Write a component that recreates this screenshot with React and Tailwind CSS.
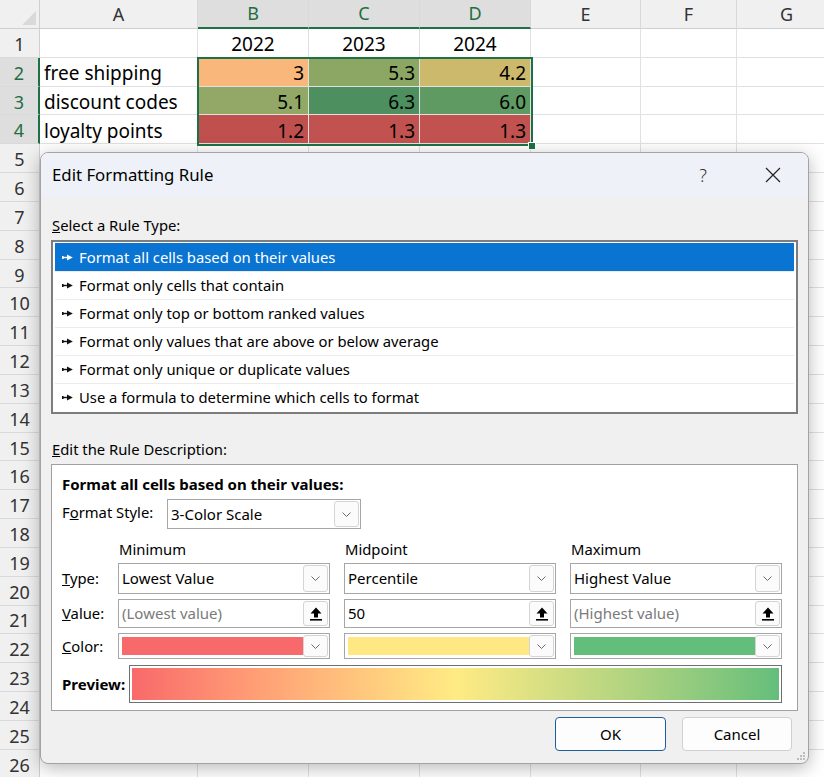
import React from 'react';

const sheetCols = [
  { key: 'A', w: 'w-[158px]' },
  { key: 'B', w: 'w-[111px]' },
  { key: 'C', w: 'w-[111px]' },
  { key: 'D', w: 'w-[111px]' },
  { key: 'E', w: 'w-[110px]' },
  { key: 'F', w: 'w-[96px]' },
  { key: 'G', w: 'w-[100px]' },
];

const selectedCols = ['B', 'C', 'D'];
const selectedRows = [2, 3, 4];

// cell contents and fills for the little table
const cells = {
  1: { B: { v: '2022', c: true }, C: { v: '2023', c: true }, D: { v: '2024', c: true } },
  2: {
    A: { v: 'free shipping' },
    B: { v: '3', bg: 'bg-[#f9b77b]' },
    C: { v: '5.3', bg: 'bg-[#8ca764]' },
    D: { v: '4.2', bg: 'bg-[#cdb96c]' },
  },
  3: {
    A: { v: 'discount codes' },
    B: { v: '5.1', bg: 'bg-[#93a866]' },
    C: { v: '6.3', bg: 'bg-[#4d8f5f]' },
    D: { v: '6.0', bg: 'bg-[#5e9a62]' },
  },
  4: {
    A: { v: 'loyalty points' },
    B: { v: '1.2', bg: 'bg-[#bf504e]' },
    C: { v: '1.3', bg: 'bg-[#c1524f]' },
    D: { v: '1.3', bg: 'bg-[#c1524f]' },
  },
};

const rules = [
  'Format all cells based on their values',
  'Format only cells that contain',
  'Format only top or bottom ranked values',
  'Format only values that are above or below average',
  'Format only unique or duplicate values',
  'Use a formula to determine which cells to format',
];

function RuleArrow({ white }) {
  const f = white ? '#fff' : '#111';
  return (
    <svg width="11" height="7" viewBox="0 0 11 7" className="shrink-0">
      <rect x="0" y="2" width="1.6" height="3" fill={f} />
      <rect x="0" y="2.8" width="6" height="1.4" fill={f} />
      <path d="M5 0.4 L10.8 3.5 L5 6.6 Z" fill={f} />
    </svg>
  );
}

function Chevron() {
  return (
    <svg width="9" height="5" viewBox="0 0 9 5">
      <polyline points="0.5,0.5 4.5,4.5 8.5,0.5" fill="none" stroke="#6a6a6a" strokeWidth="1" />
    </svg>
  );
}

function UpArrow() {
  return (
    <svg width="12" height="14" viewBox="0 0 12 14">
      <path d="M6 0.5 L11.5 6.5 H8 V10.5 H4 V6.5 H0.5 Z" fill="#000" />
      <rect x="0" y="12" width="12" height="1.6" fill="#000" />
    </svg>
  );
}

function SideButton({ children }) {
  return (
    <div className="w-[25px] self-stretch my-[1px] mr-[1px] flex items-center justify-center bg-[#fbfbfb] border border-[#d4d4d4] rounded-[3px]">
      {children}
    </div>
  );
}

function Dropdown({ text, h = 'h-[31px]' }) {
  return (
    <div className={`${h} flex items-stretch bg-white border border-[#a6a6a6]`}>
      <div className="flex-1 flex items-center pl-[3px] text-[15px] text-black">{text}</div>
      <SideButton><Chevron /></SideButton>
    </div>
  );
}

function ValueBox({ text, muted }) {
  return (
    <div className="h-[29px] flex items-stretch bg-white border border-[#a6a6a6]">
      <div className={`flex-1 flex items-center pl-[3px] text-[15px] ${muted ? 'text-[#7a7a7a]' : 'text-black'}`}>{text}</div>
      <SideButton><UpArrow /></SideButton>
    </div>
  );
}

function ColorBox({ swatch }) {
  return (
    <div className="h-[26px] flex items-stretch bg-white border border-[#a6a6a6]">
      <div className="flex-1 p-[3px] pr-0">
        <div className={`h-full ${swatch}`} />
      </div>
      <SideButton><Chevron /></SideButton>
    </div>
  );
}

function Sheet() {
  const rows = Array.from({ length: 26 }, (_, i) => i + 1);
  return (
    <div className="flex flex-col text-[19px] text-black">
      {/* column headers */}
      <div className="flex h-[29px] shrink-0 text-[18px]">
        <div className="w-[40px] shrink-0 bg-[#f0f0f0] border-r border-b border-[#cfcfcf] relative">
          <div className="absolute right-[3px] bottom-[3px] w-0 h-0 border-l-[14px] border-l-transparent border-b-[14px] border-b-[#d9d9d9]" />
        </div>
        {sheetCols.map((c) => {
          const sel = selectedCols.includes(c.key);
          return (
            <div
              key={c.key}
              className={`${c.w} shrink-0 flex items-center justify-center border-r border-[#d9d9d9] ${
                sel
                  ? 'bg-[#dedede] text-[#1e6e42] border-b-2 border-b-[#1e7145]'
                  : 'bg-[#f0f0f0] text-[#333] border-b border-b-[#cfcfcf]'
              }`}
            >
              {c.key}
            </div>
          );
        })}
      </div>
      {rows.map((r) => {
        const rsel = selectedRows.includes(r);
        return (
          <div key={r} className="flex h-[28.84px] shrink-0">
            <div
              className={`w-[40px] shrink-0 flex items-center justify-center pt-[3px] border-b border-[#d9d9d9] text-[18px] ${
                rsel
                  ? 'bg-[#dedede] text-[#1e6e42] border-r-2 border-r-[#1e7145]'
                  : 'bg-[#f0f0f0] text-[#333] border-r border-r-[#cfcfcf]'
              }`}
            >
              {r}
            </div>
            {sheetCols.map((c) => {
              const cell = (cells[r] || {})[c.key];
              return (
                <div
                  key={c.key}
                  className={`${c.w} shrink-0 flex items-center border-r border-b border-[#e1e1e1] px-[4px] pt-[3px] ${
                    cell && cell.bg ? cell.bg : 'bg-white'
                  } ${cell && cell.c ? 'justify-center' : c.key === 'A' ? 'justify-start' : 'justify-end'}`}
                >
                  {cell ? cell.v : ''}
                </div>
              );
            })}
          </div>
        );
      })}
    </div>
  );
}

function Dialog() {
  return (
    <div className="absolute left-[40px] top-[152px] w-[769px] h-[612px] flex flex-col rounded-[8px] border border-[#a3a3a3] bg-[#f0f0f0] overflow-hidden shadow-[0_4px_18px_rgba(0,0,0,0.28)] text-[14.8px] text-black">
      {/* title bar */}
      <div className="h-[44px] shrink-0 bg-[#eef2f8] flex items-center pl-[11px]">
        <span className="text-[16.8px]">Edit Formatting Rule</span>
        <span className="ml-auto mr-[58px] text-[18px] text-[#333] font-light">?</span>
        <svg width="16" height="16" viewBox="0 0 16 16" className="mr-[27px]">
          <path d="M1 1 L15 15 M15 1 L1 15" stroke="#222" strokeWidth="1.2" />
        </svg>
      </div>

      {/* body */}
      <div className="flex-1 flex flex-col px-[10px]">
        <div className="mt-[18px] pl-[1px] leading-[20px]">
          <span className="underline">S</span>elect a Rule Type:
        </div>
        <div className="mt-[5px] h-[174px] border-2 border-[#7d7d7d] bg-white px-[2px] py-[1px] flex flex-col">
          {rules.map((r, i) => (
            <div
              key={r}
              className={`h-[28px] shrink-0 flex items-center gap-[6px] pl-[7px] ${
                i === 0 ? 'bg-[#0a74d2] text-white' : 'border-t border-[#ececec]'
              }`}
            >
              <RuleArrow white={i === 0} />
              <span>{r}</span>
            </div>
          ))}
        </div>

        <div className="mt-[25px] pl-[1px] leading-[20px]">
          <span className="underline">E</span>dit the Rule Description:
        </div>
        <div className="mt-[5px] h-[247px] border border-[#a0a0a0] bg-white pl-[10px] pr-[16px] pt-[9px] flex flex-col">
          <div className="font-bold text-[15px] leading-[20px]">Format all cells based on their values:</div>
          <div className="mt-[5px] flex items-center">
            <div className="w-[105px] -mt-[4px]">
              F<span className="underline">o</span>rmat Style:
            </div>
            <div className="w-[194px]">
              <Dropdown text="3-Color Scale" h="h-[30px]" />
            </div>
          </div>

          <div className="mt-[10px] grid grid-cols-[42px_212px_212px_212px] gap-x-[14px] items-center">
            <div className="h-[20px]" />
            <div className="pl-[1px] leading-[20px]">Minimum</div>
            <div className="pl-[1px] leading-[20px]">Midpoint</div>
            <div className="pl-[1px] leading-[20px]">Maximum</div>

            <div className="mt-[4px] whitespace-nowrap"><span className="underline">T</span>ype:</div>
            <div className="mt-[4px]"><Dropdown text="Lowest Value" /></div>
            <div className="mt-[4px]"><Dropdown text="Percentile" /></div>
            <div className="mt-[4px]"><Dropdown text="Highest Value" /></div>

            <div className="mt-[5px] whitespace-nowrap"><span className="underline">V</span>alue:</div>
            <div className="mt-[5px]"><ValueBox text="(Lowest value)" muted /></div>
            <div className="mt-[5px]"><ValueBox text="50" /></div>
            <div className="mt-[5px]"><ValueBox text="(Highest value)" muted /></div>

            <div className="mt-[5px] whitespace-nowrap"><span className="underline">C</span>olor:</div>
            <div className="mt-[5px]"><ColorBox swatch="bg-[#f8696b]" /></div>
            <div className="mt-[5px]"><ColorBox swatch="bg-[#ffe884]" /></div>
            <div className="mt-[5px]"><ColorBox swatch="bg-[#63be7b]" /></div>
          </div>

          <div className="mt-[6px] flex items-center">
            <div className="w-[67px] shrink-0 font-bold text-[15px]">Preview:</div>
            <div className="w-[653px] shrink-0 h-[38px] border border-[#6f6f6f] bg-white p-[2px]">
              <div className="h-full bg-gradient-to-r from-[#f8696b] via-[#ffeb84] to-[#63be7b]" />
            </div>
          </div>
        </div>

        <div className="mt-[6px] flex justify-end gap-[16px] pr-[6px]">
          <button className="w-[111px] h-[34px] rounded-[4px] border border-[#1d5f9a] bg-[#fdfdfd] text-[15px]">OK</button>
          <button className="w-[110px] h-[34px] rounded-[4px] border border-[#d0d0d0] bg-[#fdfdfd] text-[15px]">Cancel</button>
        </div>
      </div>

      {/* resize grip */}
      <div className="absolute right-[3px] bottom-[3px] grid grid-cols-3 gap-[1px]">
        <span className="w-[2px] h-[2px]" />
        <span className="w-[2px] h-[2px]" />
        <span className="w-[2px] h-[2px] bg-[#bdbdbd]" />
        <span className="w-[2px] h-[2px]" />
        <span className="w-[2px] h-[2px] bg-[#bdbdbd]" />
        <span className="w-[2px] h-[2px] bg-[#bdbdbd]" />
        <span className="w-[2px] h-[2px] bg-[#bdbdbd]" />
        <span className="w-[2px] h-[2px] bg-[#bdbdbd]" />
        <span className="w-[2px] h-[2px] bg-[#bdbdbd]" />
      </div>
    </div>
  );
}

export default function App() {
  return (
    <div
      className="relative w-[824px] h-[777px] overflow-hidden bg-white"
      style={{ fontFamily: '"Noto Sans", "Open Sans", sans-serif' }}
    >
      <Sheet />

      {/* selection outline over B2:D4 */}
      <div className="absolute left-[197px] top-[57px] w-[336px] h-[89px] border-2 border-[#1e7145] pointer-events-none" />
      <div className="absolute left-[528px] top-[142px] w-[8px] h-[8px] bg-[#1e7145] border border-white" />

      <Dialog />
    </div>
  );
}
